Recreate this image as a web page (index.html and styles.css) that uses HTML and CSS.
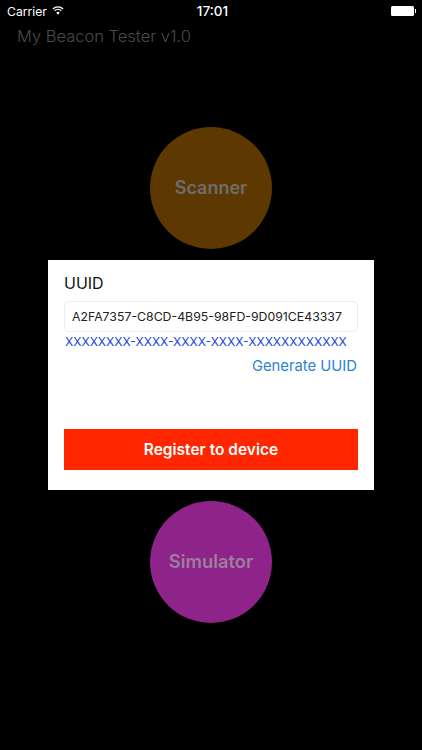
FILE: index.html
```html
<!DOCTYPE html>
<html lang="en">
<head>
  <meta charset="UTF-8">
  <title>My Beacon Tester</title>
  <link rel="stylesheet" href="styles.css">
</head>
<body>
  <div class="screen">
    <div class="status-bar">
      <div class="status-left">
        <span>Carrier</span>
        <svg class="wifi" width="12" height="9" viewBox="0 0 14 11">
          <path d="M7 10.6 4.9 8.2a3 3 0 0 1 4.2 0z" fill="#fff"/>
          <path d="M2.9 5.9a5.8 5.8 0 0 1 8.2 0" fill="none" stroke="#fff" stroke-width="1.6"/>
          <path d="M.8 3.6a8.8 8.8 0 0 1 12.4 0" fill="none" stroke="#fff" stroke-width="1.6"/>
        </svg>
      </div>
      <div class="status-time">17:01</div>
      <div class="status-right">
        <div class="battery"></div>
        <div class="battery-tip"></div>
      </div>
    </div>
    <h1 class="app-title">My Beacon Tester v1.0</h1>
    <div class="circle-btn scanner"><span>Scanner</span></div>
    <div class="circle-btn simulator"><span>Simulator</span></div>
  </div>

  <div class="dialog">
    <div class="dialog-label">UUID</div>
    <input class="uuid-input" type="text" value="A2FA7357-C8CD-4B95-98FD-9D091CE43337">
    <div class="uuid-format">XXXXXXXX-XXXX-XXXX-XXXX-XXXXXXXXXXXX</div>
    <div class="generate">Generate UUID</div>
    <button class="register-btn">Register to device</button>
  </div>
</body>
</html>
```

FILE: styles.css
```css
body {
  margin: 0;
  background: #000;
  font-family: Inter, "Liberation Sans", sans-serif;
  width: 422px;
  height: 750px;
  overflow: hidden;
  position: relative;
}

.screen {
  display: flex;
  flex-direction: column;
  height: 750px;
}

.status-bar {
  display: grid;
  grid-template-columns: 1fr auto 1fr;
  align-items: center;
  height: 22px;
  padding: 0 6px 0 7px;
  color: #fff;
  font-size: 12.2px;
}

.status-left {
  display: flex;
  align-items: center;
  gap: 5px;
}

.wifi {
  margin-top: -2px;
}

.status-time {
  margin-left: 2px;
  font-weight: 500;
  font-size: 13.5px;
}

.status-right {
  display: flex;
  align-items: center;
  justify-content: flex-end;
}

.battery {
  width: 23px;
  height: 10px;
  background: #fff;
  border-radius: 1.5px;
}

.battery-tip {
  width: 1.5px;
  height: 4px;
  margin-left: 0.5px;
  background: #fff;
}

.app-title {
  margin: 4px 0 0 17px;
  height: 20px;
  line-height: 20px;
  font-size: 16.5px;
  font-weight: 300;
  color: #4b4b4b;
}

.circle-btn {
  display: flex;
  align-items: center;
  justify-content: center;
  box-sizing: border-box;
  width: 122px;
  height: 122px;
  padding-bottom: 2px;
  border-radius: 50%;
  align-self: center;
  font-weight: 600;
}

.scanner {
  margin-top: 81px;
  font-size: 18px;
  background: #5d3800;
  color: #6e6e6e;
}

.simulator {
  margin-top: 252px;
  font-size: 18.3px;
  background: #8e2389;
  color: #9c7f9b;
}

/* sits over the two circles */
.dialog {
  position: absolute;
  left: 48px;
  top: 260px;
  width: 326px;
  height: 230px;
  box-sizing: border-box;
  padding: 13px 16px 0;
  background: #fff;
  display: flex;
  flex-direction: column;
}

.dialog-label {
  font-size: 16px;
  line-height: 20px;
  color: #111;
}

.uuid-input {
  margin-top: 8px;
  height: 31px;
  box-sizing: border-box;
  padding: 0 7px;
  border: 1px solid #ececec;
  border-radius: 5px;
  font-family: inherit;
  font-size: 12.3px;
  color: #222;
  outline: none;
}

.uuid-format {
  margin-top: 2px;
  padding-left: 1px;
  font-size: 12.05px;
  line-height: 16px;
  color: #2447d8;
  white-space: nowrap;
}

.generate {
  margin-top: 6px;
  text-align: right;
  font-size: 14.8px;
  line-height: 20px;
  color: #2a84d8;
  padding-right: 1px;
}

.register-btn {
  margin-top: 53px;
  height: 41px;
  border: none;
  background: #ff2600;
  color: #fff;
  font-family: inherit;
  font-size: 15.5px;
  font-weight: 600;
}
```
